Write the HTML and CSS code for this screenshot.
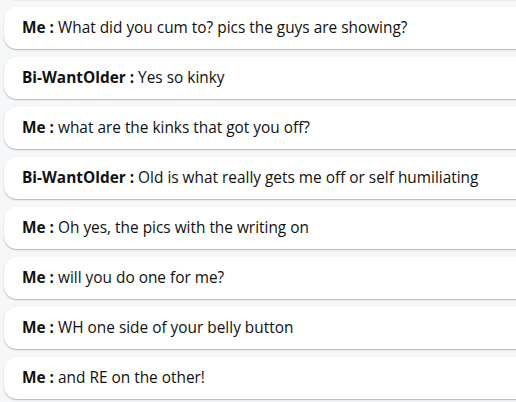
FILE: index.html
```html
<!DOCTYPE html>
<html>
<head>
<meta charset="utf-8">
<link rel="stylesheet" href="styles.css">
</head>
<body>
<div class="chat">
  <div class="msg"></div>
  <div class="msg"><b>Me :</b> What did you cum to? pics the guys are showing?</div>
  <div class="msg"><b>Bi-WantOlder :</b> Yes so kinky</div>
  <div class="msg"><b>Me :</b> what are the kinks that got you off?</div>
  <div class="msg"><b>Bi-WantOlder :</b> Old is what really gets me off or self humiliating</div>
  <div class="msg"><b>Me :</b> Oh yes, the pics with the writing on</div>
  <div class="msg"><b>Me :</b> will you do one for me?</div>
  <div class="msg"><b>Me :</b> WH one side of your belly button</div>
  <div class="msg"><b>Me :</b> and RE on the other!</div>
</div>
</body>
</html>
```
FILE: styles.css
```css
html, body {
  margin: 0;
  height: 100%;
  overflow: hidden;
  background: #f6f7f9;
}
.chat {
  display: flex;
  flex-direction: column;
  gap: 8px;
  margin-top: -43px;
  padding-left: 4px;
  margin-right: -30px;
  font-family: "Open Sans", sans-serif;
  font-size: 15.4px;
  color: #111;
}
.msg {
  height: 42px;
  line-height: 42px;
  padding: 0 18px;
  background: #fff;
  border-radius: 13px;
  box-shadow: 0 1px 1.5px rgba(0,0,0,0.28);
  white-space: nowrap;
}
.msg b {
  font-weight: 700;
}
```
